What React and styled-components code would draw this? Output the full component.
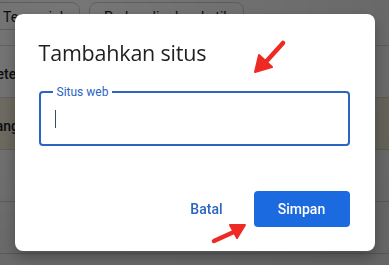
import styled, { createGlobalStyle } from "styled-components";

const GlobalStyle = createGlobalStyle`
  html, body {
    margin: 0;
    padding: 0;
    width: 389px;
    height: 265px;
    overflow: hidden;
    font-family: Roboto, "Noto Sans", Arial, sans-serif;
  }
`

export default function App() {
  return (
    <>
      <GlobalStyle />
      <Page>
        <ChipRow>
          <Chip $w={92}>Tes perjalanan</Chip>
          <Chip $w={155}>Perbandingkan ketik</Chip>
        </ChipRow>
        <ListRow>Setelan situs</ListRow>
        <ListRow $note>Jangan pernah menyimpan</ListRow>
        <ListRow />
        <ListRow />
      </Page>
      <Overlay>
        <Dialog>
          <Title>Tambahkan situs</Title>
          <Field>
            <Legend>Situs web</Legend>
            <Caret />
          </Field>
          <Actions>
            <TextButton>Batal</TextButton>
            <PrimaryButton>Simpan</PrimaryButton>
          </Actions>
          <Arrow $x={252} $y={40} viewBox="0 0 34 36" width="34" height="36">
            <path d="M30 4 L11 25" stroke="#ee2a24" strokeWidth="4.5" strokeLinecap="round" />
            <path d="M2 33 L6 16 L19 28 Z" fill="#ee2a24" stroke="#ee2a24" strokeWidth="2" strokeLinejoin="round" />
          </Arrow>
          <Arrow $x={210} $y={223} viewBox="0 0 36 22" width="36" height="22">
            <path d="M3 19 L25 9" stroke="#ee2a24" strokeWidth="4.5" strokeLinecap="round" />
            <path d="M34 3 L19 3 L26 16 Z" fill="#ee2a24" stroke="#ee2a24" strokeWidth="2" strokeLinejoin="round" />
          </Arrow>
        </Dialog>
      </Overlay>
    </>
  )
}

const Page = styled.div`
  width: 389px;
  height: 265px;
  background: #fdfdfd;
  color: #202124;
  font-size: 14px;
`

const ChipRow = styled.div`
  display: flex;
  gap: 9px;
  padding: 2px 0 0 0;
  margin-left: -12px;
  height: 46px;
  border-bottom: 1px solid #d6d6d6;
  box-sizing: border-box;
`

const Chip = styled.div`
  width: ${(p) => p.$w}px;
  height: 28px;
  border: 1px solid #cfcfcf;
  border-radius: 8px;
  padding: 6px 0 0 14px;
  box-sizing: border-box;
  font-size: 14px;
  white-space: nowrap;
  overflow: hidden;
`

const ListRow = styled.div`
  height: 52px;
  border-bottom: 1px solid #d6d6d6;
  box-sizing: border-box;
  padding: 20px 0 0 0;
  margin-left: -12px;
  background: ${(p) => (p.$note ? "#f3ecd8" : "transparent")};
  font-weight: 500;
  white-space: nowrap;
`

const Overlay = styled.div`
  position: fixed;
  inset: 0;
  background: radial-gradient(ellipse at 20% 10%, rgba(0, 0, 0, 0.53), rgba(0, 0, 0, 0.6) 90%);
  display: flex;
  align-items: center;
  justify-content: center;
`

const Dialog = styled.div`
  position: relative;
  width: 360px;
  height: 237px;
  margin-top: -1px;
  background: #fff;
  border-radius: 8px;
  box-shadow: 0 6px 14px rgba(0, 0, 0, 0.3);
  padding: 24px 25px 24px 24px;
  box-sizing: border-box;
  display: flex;
  flex-direction: column;
`

const Title = styled.h1`
  margin: 0;
  font-family: "Open Sans", Roboto, sans-serif;
  font-weight: 400;
  font-size: 21.5px;
  line-height: 30px;
  color: #1f1f1f;
  letter-spacing: -0.2px;
`

const Field = styled.div`
  position: relative;
  margin-top: 23px;
  height: 55px;
  border: 2px solid #2b64c2;
  border-radius: 4px;
  box-sizing: border-box;
  padding: 17px 0 0 14px;
`

const Legend = styled.span`
  position: absolute;
  left: 12px;
  top: -9px;
  padding: 0 4px;
  background: #fff;
  color: #2b64c2;
  font-size: 12px;
  line-height: 16px;
`

const Caret = styled.div`
  width: 1px;
  height: 18px;
  background: #3a4b66;
`

const Actions = styled.div`
  margin-top: auto;
  display: flex;
  justify-content: flex-end;
  align-items: center;
  gap: 8px;
`

const TextButton = styled.button`
  border: none;
  background: none;
  height: 36px;
  padding: 0 23px 0 24px;
  font-family: Roboto, sans-serif;
  font-size: 14px;
  font-weight: 500;
  color: #2b64c2;
  cursor: pointer;
`

const PrimaryButton = styled.button`
  border: none;
  width: 96px;
  height: 36px;
  border-radius: 4px;
  background: #1b6ae0;
  font-family: Roboto, sans-serif;
  font-size: 14px;
  font-weight: 500;
  color: #fff;
  cursor: pointer;
`

const Arrow = styled.svg`
  position: absolute;
  left: ${(p) => p.$x - 14}px;
  top: ${(p) => p.$y - 15}px;
  overflow: visible;
`
